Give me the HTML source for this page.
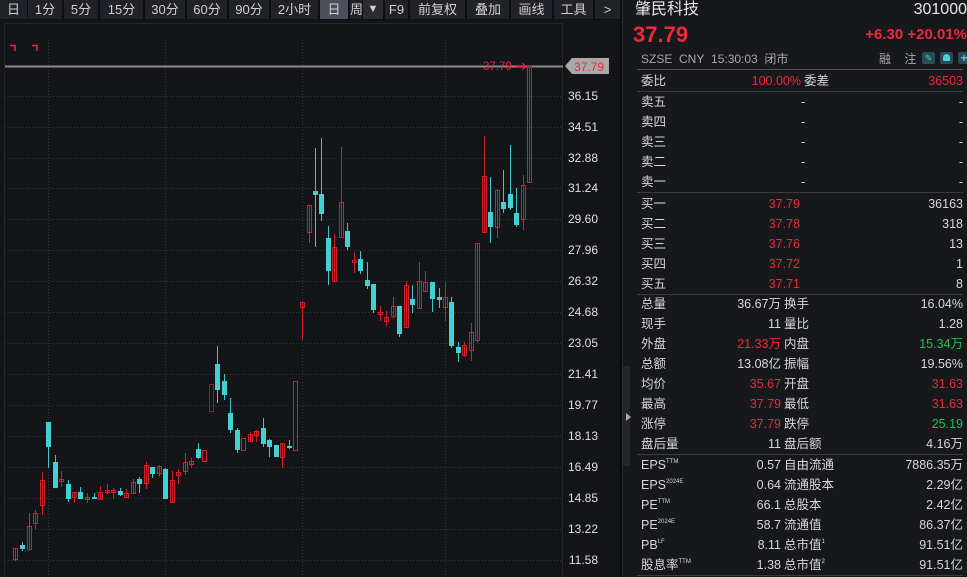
<!DOCTYPE html>
<html><head><meta charset="utf-8"><style>
*{margin:0;padding:0;box-sizing:border-box}
body{width:967px;height:577px;background:#131519;overflow:hidden;position:relative;font-family:"Liberation Sans","Noto Sans CJK SC",sans-serif;color:#d8d8d8}
.tb{position:absolute;top:0;left:0;width:622px;height:20px;background:#0d0e11}
.tb div{position:absolute;top:0;height:19px;background:#202227;color:#d0d0d0;font-size:13px;line-height:19px;text-align:center}
.ax{position:absolute;right:369px;font-size:12px;color:#e0e0e0;text-align:right;width:50px}
.pn{position:absolute;left:622px;top:0;width:345px;height:577px;background:#16181c;border-left:1px solid #2a2c31}
.r{position:absolute;left:18px;width:322px;height:20px;font-size:12.5px;line-height:20px}
.r span{position:absolute;top:0}
.l{left:0}.m{right:182px;text-align:right}.k{left:143px}.v{right:0;text-align:right}.p{right:163px}
.red{color:#f0283a}.grn{color:#20c050}
.hr{position:absolute;left:14px;width:326px;height:1px;background:#3a3c42}
sup{font-size:6px;vertical-align:baseline;position:relative;top:-6px;line-height:0}
.rc rect{fill:none;stroke:#d0202a;stroke-width:1}
.rc path{stroke:#d0202a;fill:none}
</style></head><body>
<div class="tb">
<div style="left:0;width:27px">日</div><div style="left:28px;width:34px">1分</div><div style="left:64px;width:34px">5分</div><div style="left:100px;width:43px">15分</div><div style="left:145px;width:40px">30分</div><div style="left:187px;width:40px">60分</div><div style="left:229px;width:40px">90分</div><div style="left:271px;width:47px">2小时</div><div style="left:320px;width:28px;background:#4b4f5a">日</div><div style="left:350px;width:12px;overflow:hidden;text-align:left">周</div><div style="left:363px;width:20px;background:#2a2c31;font-size:11px">▼</div><div style="left:385px;width:23px">F9</div><div style="left:410px;width:55px">前复权</div><div style="left:467px;width:42px">叠加</div><div style="left:511px;width:41px">画线</div><div style="left:554px;width:39px">工具</div><div style="left:595px;width:25px">&gt;</div>
</div>
<svg style="position:absolute;left:0;top:20px" width="622" height="557" viewBox="0 20 622 557">
<rect x="4.5" y="23.5" width="558" height="560" fill="none" stroke="#24262b"/>
<g stroke="#33363c" stroke-dasharray="1,2" stroke-width="1">
<path d="M5 96.5H563M5 127.5H563M5 158.5H563M5 188.5H563M5 219.5H563M5 250.5H563M5 281.5H563M5 312.5H563M5 343.5H563M5 374.5H563M5 405.5H563M5 436.5H563M5 467.5H563M5 498.5H563M5 529.5H563M5 560.5H563"/>
<path d="M48.5 40V577M165.5 40V577M302.5 40V577M445.5 40V577"/>
</g>
<path d="M10 45.5H15V51M32 45.5H37V51" stroke="#f0283a" fill="none" stroke-width="1.5"/>
<path d="M5 66.5H563" stroke="#8a8a8a" stroke-width="2"/>
<text x="483" y="70" fill="#e0283a" font-size="11.5" font-family="Liberation Sans">37.79</text>
<path d="M516 66.5H526M522 63L526 66.5L522 70" stroke="#e0283a" fill="none"/>
<g class="rc">
<path d="M15.5 548V561M29.5 513V551M35.5 510V529M42.5 472V515M61.5 471V487M74.5 492V503M87.5 493V503M100.5 486V499M107.5 484V494M113.5 488V499M126.5 489V497M133.5 479V493M146.5 462V489M159.5 465V477M172.5 471V502M178.5 469V484M185.5 453V475M191.5 458V467M250.5 432V442M256.5 430V442M282.5 443V468M302.5 302V340M309.5 205V243M334.5 234V281M341.5 147V237M354.5 252V273M380.5 306V321M386.5 311V326M393.5 297V319M406.5 281V327M419.5 262V308M425.5 271V291M445.5 282V321M464.5 342V357M471.5 323V361M477.5 243V343M484.5 136V232M497.5 189V238M523.5 175V230M529.5 66V182"/>
<rect x="13.5" y="548.5" width="4" height="11"/><rect x="27.5" y="526.5" width="4" height="23"/><rect x="33.5" y="513.5" width="4" height="10"/><rect x="40.5" y="480.5" width="4" height="25"/><rect x="59.5" y="479.5" width="4" height="2"/><rect x="72.5" y="492.5" width="4" height="5"/><rect x="85.5" y="497.5" width="4" height="2"/><rect x="98.5" y="492.5" width="4" height="7"/><rect x="105.5" y="490.5" width="4" height="2"/><rect x="111.5" y="490.5" width="4" height="2"/><rect x="124.5" y="493.5" width="4" height="4"/><rect x="131.5" y="482.5" width="4" height="11"/><rect x="144.5" y="465.5" width="4" height="18"/><rect x="157.5" y="466.5" width="4" height="7"/><rect x="170.5" y="480.5" width="4" height="22"/><rect x="176.5" y="472.5" width="4" height="3"/><rect x="183.5" y="462.5" width="4" height="9"/><rect x="189.5" y="461.5" width="4" height="3"/><rect x="202.5" y="450.5" width="4" height="11"/><rect x="209.5" y="384.5" width="4" height="27" style="stroke:#a01820"/><rect x="241.5" y="438.5" width="4" height="12"/><rect x="248.5" y="434.5" width="4" height="7"/><rect x="254.5" y="431.5" width="4" height="4"/><rect x="280.5" y="443.5" width="4" height="14"/><rect x="293.5" y="381.5" width="4" height="69"/><rect x="300.5" y="302.5" width="4" height="5"/><rect x="307.5" y="205.5" width="4" height="27"/><rect x="332.5" y="247.5" width="4" height="34"/><rect x="339.5" y="202.5" width="4" height="35"/><rect x="352.5" y="260.5" width="4" height="2"/><rect x="378.5" y="312.5" width="4" height="2"/><rect x="384.5" y="317.5" width="4" height="4"/><rect x="391.5" y="306.5" width="4" height="10"/><rect x="404.5" y="285.5" width="4" height="42"/><rect x="417.5" y="281.5" width="4" height="27"/><rect x="423.5" y="282.5" width="4" height="9"/><rect x="443.5" y="297.5" width="4" height="10"/><rect x="462.5" y="345.5" width="4" height="10"/><rect x="469.5" y="332.5" width="4" height="18"/><rect x="475.5" y="243.5" width="4" height="97"/><rect x="482.5" y="176.5" width="4" height="56"/><rect x="495.5" y="190.5" width="4" height="37"/><rect x="521.5" y="185.5" width="4" height="34"/><rect x="527.5" y="66.5" width="4" height="116"/>
</g>
<g stroke="#3ec8c8" fill="#42d0d0" stroke-width="1">
<path d="M22.5 542V551M48.5 422V468M55.5 455V488M68.5 480V502M80.5 487V499M94.5 493V499M120.5 488V496M139.5 477V493M152.5 467V478M165.5 468V499M198.5 443V459M217.5 346V403M224.5 374V400M230.5 398V433M237.5 428V453M263.5 418V447M269.5 439V457M289.5 440V449M315.5 148V247M321.5 138V221M328.5 226V285M347.5 223V250M360.5 251V274M367.5 262V289M373.5 284V313M399.5 306V337M412.5 285V313M432.5 282V312M439.5 288V308M451.5 297V348M458.5 342V362M490.5 177V243M503.5 170V213M510.5 145V210M516.5 188V227"/>
<g stroke="none">
<rect x="20" y="545" width="5" height="4"/><rect x="46" y="422" width="5" height="25"/><rect x="53" y="462" width="5" height="26"/><rect x="66" y="484" width="5" height="15"/><rect x="78" y="492" width="5" height="7"/><rect x="92" y="497" width="5" height="2"/><rect x="118" y="491" width="5" height="4"/><rect x="137" y="479" width="5" height="5"/><rect x="150" y="467" width="5" height="7"/><rect x="163" y="469" width="5" height="30"/><rect x="196" y="449" width="5" height="9"/><rect x="215" y="364" width="5" height="26"/><rect x="222" y="381" width="5" height="14"/><rect x="228" y="413" width="5" height="17"/><rect x="235" y="430" width="5" height="20"/><rect x="261" y="428" width="5" height="16"/><rect x="267" y="440" width="5" height="7"/><rect x="274" y="445" width="5" height="12"/><rect x="287" y="446" width="5" height="2"/><rect x="313" y="191" width="5" height="4"/><rect x="319" y="194" width="5" height="20"/><rect x="326" y="238" width="5" height="33"/><rect x="345" y="231" width="5" height="16"/><rect x="358" y="259" width="5" height="12"/><rect x="365" y="280" width="5" height="6"/><rect x="371" y="284" width="5" height="26"/><rect x="397" y="306" width="5" height="28"/><rect x="410" y="299" width="5" height="6"/><rect x="430" y="282" width="5" height="17"/><rect x="437" y="297" width="5" height="3"/><rect x="449" y="302" width="5" height="44"/><rect x="456" y="347" width="5" height="6"/><rect x="488" y="212" width="5" height="15"/><rect x="501" y="202" width="5" height="7"/><rect x="508" y="194" width="5" height="14"/><rect x="514" y="213" width="5" height="12"/>
</g></g>
<path d="M565 66L572 58H609V74H572Z" fill="#a9a9a9"/>
<text x="574" y="71" fill="#f0283a" font-size="12" font-family="Liberation Sans">37.79</text>
</svg>
<div class="ax" style="top:89px">36.15</div><div class="ax" style="top:120px">34.51</div><div class="ax" style="top:151px">32.88</div><div class="ax" style="top:181px">31.24</div><div class="ax" style="top:212px">29.60</div><div class="ax" style="top:243px">27.96</div><div class="ax" style="top:274px">26.32</div><div class="ax" style="top:305px">24.68</div><div class="ax" style="top:336px">23.05</div><div class="ax" style="top:367px">21.41</div><div class="ax" style="top:398px">19.77</div><div class="ax" style="top:429px">18.13</div><div class="ax" style="top:460px">16.49</div><div class="ax" style="top:491px">14.85</div><div class="ax" style="top:522px">13.22</div><div class="ax" style="top:553px">11.58</div>
<div style="position:absolute;left:619px;top:20px;width:3px;height:557px;background:#0d0e11"></div>
<div class="pn">
<div style="position:absolute;left:0;top:366px;width:7px;height:100px;background:#24262b"></div>
<div style="position:absolute;left:3px;top:413px;width:0;height:0;border-left:5px solid #aaa;border-top:4px solid transparent;border-bottom:4px solid transparent"></div>
<div style="position:absolute;left:12px;top:0;font-size:16px;line-height:20px;color:#e6e6e6">肇民科技</div>
<div style="position:absolute;right:0;top:0;font-size:16px;line-height:20px;color:#e6e6e6">301000</div>
<div style="position:absolute;left:10px;top:22px;font-size:22px;line-height:26px;font-weight:bold;color:#f0283a">37.79</div>
<div style="position:absolute;right:0;top:25px;font-size:15px;line-height:20px;font-weight:bold;color:#f0283a">+6.30 +20.01%</div>
<div style="position:absolute;left:18px;top:50px;font-size:12px;color:#a8a8a8">SZSE&nbsp; CNY&nbsp; 15:30:03&nbsp; 闭市</div>
<div style="position:absolute;left:256px;top:50px;font-size:12px;color:#a8a8a8">融&nbsp;&nbsp;&nbsp; 注</div>
<div style="position:absolute;left:299px;top:52px;width:13px;height:12px;background:#2c4a55;border-radius:2px;color:#4ad0e0;font-size:9px;text-align:center;line-height:12px">✎</div>
<div style="position:absolute;left:317px;top:52px;width:13px;height:12px;background:#2c4a55;border-radius:2px"><div style="margin:2px auto;width:7px;height:7px;background:#4ad0e0;border-radius:4px 4px 1px 1px"></div></div>
<div style="position:absolute;left:335px;top:52px;width:12px;height:12px;background:#2c4a55;border-radius:2px;color:#4ad0e0;font-size:12px;font-weight:bold;text-align:center;line-height:12px">+</div>
<div class="hr" style="top:69px;background:#555"></div>
<div class="r" style="top:71px"><span class="l">委比</span><span class="red" style="right:162px">100.00%</span><span style="left:163px">委差</span><span class="v red">36503</span></div>
<div class="hr" style="top:91px"></div>
<div class="r" style="top:92px"><span class="l">卖五</span><span style="left:160px">-</span><span class="v">-</span></div>
<div class="r" style="top:112px"><span class="l">卖四</span><span style="left:160px">-</span><span class="v">-</span></div>
<div class="r" style="top:132px"><span class="l">卖三</span><span style="left:160px">-</span><span class="v">-</span></div>
<div class="r" style="top:152px"><span class="l">卖二</span><span style="left:160px">-</span><span class="v">-</span></div>
<div class="r" style="top:172px"><span class="l">卖一</span><span style="left:160px">-</span><span class="v">-</span></div>
<div class="hr" style="top:192px"></div>
<div class="r" style="top:194px"><span class="l">买一</span><span class="p red">37.79</span><span class="v">36163</span></div>
<div class="r" style="top:214px"><span class="l">买二</span><span class="p red">37.78</span><span class="v">318</span></div>
<div class="r" style="top:234px"><span class="l">买三</span><span class="p red">37.76</span><span class="v">13</span></div>
<div class="r" style="top:254px"><span class="l">买四</span><span class="p red">37.72</span><span class="v">1</span></div>
<div class="r" style="top:274px"><span class="l">买五</span><span class="p red">37.71</span><span class="v">8</span></div>
<div class="hr" style="top:294px"></div>
<div class="r" style="top:294px"><span class="l">总量</span><span class="m">36.67万</span><span class="k">换手</span><span class="v">16.04%</span></div>
<div class="r" style="top:314px"><span class="l">现手</span><span class="m">11</span><span class="k">量比</span><span class="v">1.28</span></div>
<div class="r" style="top:334px"><span class="l">外盘</span><span class="m red">21.33万</span><span class="k">内盘</span><span class="v grn">15.34万</span></div>
<div class="r" style="top:354px"><span class="l">总额</span><span class="m">13.08亿</span><span class="k">振幅</span><span class="v">19.56%</span></div>
<div class="r" style="top:374px"><span class="l">均价</span><span class="m red">35.67</span><span class="k">开盘</span><span class="v red">31.63</span></div>
<div class="r" style="top:394px"><span class="l">最高</span><span class="m red">37.79</span><span class="k">最低</span><span class="v red">31.63</span></div>
<div class="r" style="top:414px"><span class="l">涨停</span><span class="m red">37.79</span><span class="k">跌停</span><span class="v grn">25.19</span></div>
<div class="r" style="top:434px"><span class="l">盘后量</span><span class="m">11</span><span class="k">盘后额</span><span class="v">4.16万</span></div>
<div class="hr" style="top:454px"></div>
<div class="r" style="top:455px"><span class="l">EPS<sup>TTM</sup></span><span class="m">0.57</span><span class="k">自由流通</span><span class="v">7886.35万</span></div>
<div class="r" style="top:475px"><span class="l">EPS<sup>2024E</sup></span><span class="m">0.64</span><span class="k">流通股本</span><span class="v">2.29亿</span></div>
<div class="r" style="top:495px"><span class="l">PE<sup>TTM</sup></span><span class="m">66.1</span><span class="k">总股本</span><span class="v">2.42亿</span></div>
<div class="r" style="top:515px"><span class="l">PE<sup>2024E</sup></span><span class="m">58.7</span><span class="k">流通值</span><span class="v">86.37亿</span></div>
<div class="r" style="top:535px"><span class="l">PB<sup>LF</sup></span><span class="m">8.11</span><span class="k">总市值<sup>1</sup></span><span class="v">91.51亿</span></div>
<div class="r" style="top:555px"><span class="l">股息率<sup>TTM</sup></span><span class="m">1.38</span><span class="k">总市值<sup>2</sup></span><span class="v">91.51亿</span></div>
<div class="hr" style="top:575px"></div>
</div>
</body></html>
